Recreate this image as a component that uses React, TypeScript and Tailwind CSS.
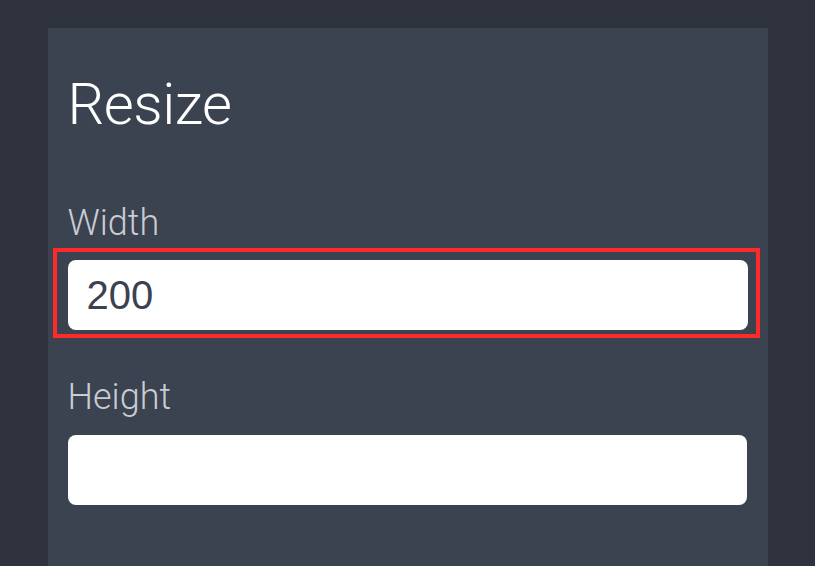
import { useState } from "react";

export default function App() {
  const [width, setWidth] = useState("200");
  const [height, setHeight] = useState("");

  return (
    <div className="min-h-screen bg-[#2e323c] pt-[28px] [font-family:Roboto,'Liberation_Sans',sans-serif]">
      <div className="mx-auto min-h-[538px] w-[720px] bg-[#3b4250] pl-[20px] pr-[21px] pt-[47px]">
        <h1 className="text-[58px] font-light leading-none tracking-[-0.5px] text-white">Resize</h1>

        <label className="mt-[72px] block text-[36px] font-light leading-none text-[#c9ccd2]">
          Width
        </label>
        <div className="-ml-[15px] -mr-[13px] mt-[7px] border-4 border-[#ff2a2a] pb-[4px] pl-[11px] pr-[8px] pt-[8px]">
          <input
            value={width}
            onChange={(e) => setWidth(e.target.value)}
            className="block h-[70px] w-full rounded-[8px] bg-white px-[19px] text-[40px] text-[#3b4150] outline-none [font-family:'Liberation_Sans',Arial,sans-serif]"
          />
        </div>

        <label className="mt-[41px] block text-[36px] font-light leading-none text-[#c9ccd2]">
          Height
        </label>
        <input
          value={height}
          onChange={(e) => setHeight(e.target.value)}
          className="mt-[20px] block h-[70px] w-full rounded-[8px] bg-white px-[19px] text-[40px] text-[#3b4150] outline-none [font-family:'Liberation_Sans',Arial,sans-serif]"
        />
      </div>
    </div>
  );
}
